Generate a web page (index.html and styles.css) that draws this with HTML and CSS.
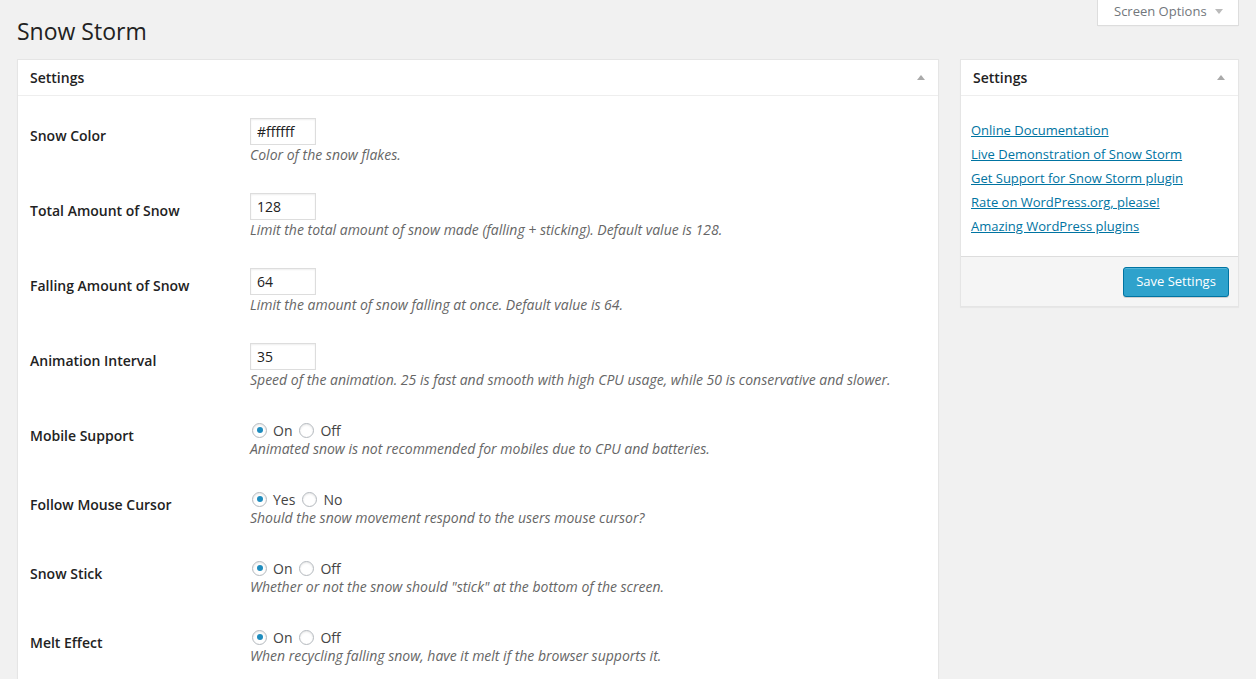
FILE: index.html
```html
<!DOCTYPE html>
<html lang="en">
<head>
<meta charset="utf-8">
<title>Snow Storm</title>
<link rel="stylesheet" href="styles.css">
</head>
<body>
<div class="wrap">
  <div class="topline">
    <h1 class="page-title">Snow Storm</h1>
    <button class="screen-options" type="button">Screen Options <span class="caret-down"></span></button>
  </div>
  <div class="columns">
    <div class="postbox main-box">
      <div class="box-head"><span>Settings</span><span class="caret-up"></span></div>
      <div class="form">
        <div class="row">
          <div class="label">Snow Color</div>
          <div class="field">
            <input class="text-input" type="text" value="#ffffff">
            <p class="description">Color of the snow flakes.</p>
          </div>
        </div>
        <div class="row">
          <div class="label">Total Amount of Snow</div>
          <div class="field">
            <input class="text-input" type="text" value="128">
            <p class="description">Limit the total amount of snow made (falling + sticking). Default value is 128.</p>
          </div>
        </div>
        <div class="row">
          <div class="label">Falling Amount of Snow</div>
          <div class="field">
            <input class="text-input" type="text" value="64">
            <p class="description">Limit the amount of snow falling at once. Default value is 64.</p>
          </div>
        </div>
        <div class="row">
          <div class="label">Animation Interval</div>
          <div class="field">
            <input class="text-input" type="text" value="35">
            <p class="description">Speed of the animation. 25 is fast and smooth with high CPU usage, while 50 is conservative and slower.</p>
          </div>
        </div>
        <div class="row">
          <div class="label">Mobile Support</div>
          <div class="field">
            <div class="radios">
              <label class="opt"><input type="radio" name="mobile" checked>On</label>
              <label class="opt"><input type="radio" name="mobile">Off</label>
            </div>
            <p class="description">Animated snow is not recommended for mobiles due to CPU and batteries.</p>
          </div>
        </div>
        <div class="row">
          <div class="label">Follow Mouse Cursor</div>
          <div class="field">
            <div class="radios">
              <label class="opt"><input type="radio" name="mouse" checked>Yes</label>
              <label class="opt"><input type="radio" name="mouse">No</label>
            </div>
            <p class="description">Should the snow movement respond to the users mouse cursor?</p>
          </div>
        </div>
        <div class="row">
          <div class="label">Snow Stick</div>
          <div class="field">
            <div class="radios">
              <label class="opt"><input type="radio" name="stick" checked>On</label>
              <label class="opt"><input type="radio" name="stick">Off</label>
            </div>
            <p class="description">Whether or not the snow should "stick" at the bottom of the screen.</p>
          </div>
        </div>
        <div class="row">
          <div class="label">Melt Effect</div>
          <div class="field">
            <div class="radios">
              <label class="opt"><input type="radio" name="melt" checked>On</label>
              <label class="opt"><input type="radio" name="melt">Off</label>
            </div>
            <p class="description">When recycling falling snow, have it melt if the browser supports it.</p>
          </div>
        </div>
      </div>
    </div>
    <div class="postbox side-box">
      <div class="box-head"><span>Settings</span><span class="caret-up"></span></div>
      <ul class="links">
        <li><a href="#">Online Documentation</a></li>
        <li><a href="#">Live Demonstration of Snow Storm</a></li>
        <li><a href="#">Get Support for Snow Storm plugin</a></li>
        <li><a href="#">Rate on WordPress.org, please!</a></li>
        <li><a href="#">Amazing WordPress plugins</a></li>
      </ul>
      <div class="actions">
        <button class="primary" type="button">Save Settings</button>
      </div>
    </div>
  </div>
</div>
</body>
</html>
```
FILE: styles.css
```css
* { box-sizing: border-box; }
html, body { margin: 0; padding: 0; }
body {
  background: #f1f1f1;
  color: #444;
  font-family: "Open Sans", "Noto Sans", sans-serif;
  font-size: 13px;
}
.wrap {
  padding: 0 17px 0 17px;
}
.topline {
  display: flex;
  justify-content: space-between;
  align-items: flex-start;
}
.page-title {
  margin: 17px 0 0 0;
  font-size: 23px;
  font-weight: 400;
  line-height: 29px;
  color: #222;
}
.screen-options {
  display: flex;
  align-items: center;
  height: 26px;
  width: 142px;
  margin: 0;
  padding: 0 0 3px 16px;
  background: #fff;
  border: 1px solid #ddd;
  border-top: none;
  font-family: inherit;
  font-size: 13px;
  color: #72777c;
  line-height: 22px;
  box-shadow: 0 1px 1px -1px rgba(0,0,0,.1);
}
.caret-down {
  display: inline-block;
  width: 0;
  height: 0;
  margin-left: 8px;
  border-left: 4px solid transparent;
  border-right: 4px solid transparent;
  border-top: 5px solid #bbb;
}
.columns {
  display: flex;
  align-items: flex-start;
  gap: 21px;
  margin-top: 13px;
}
.postbox {
  background: #fff;
  border: 1px solid #e5e5e5;
  box-shadow: 0 1px 1px rgba(0,0,0,.04);
}
.main-box {
  width: 922px;
  flex: none;
  padding-bottom: 40px;
}
.side-box {
  width: 279px;
  flex: none;
}
.box-head {
  display: flex;
  justify-content: space-between;
  align-items: center;
  height: 36px;
  padding: 0 13px 1px 12px;
  border-bottom: 1px solid #eee;
  font-size: 14px;
  font-weight: 600;
  color: #222;
}
.caret-up {
  display: inline-block;
  width: 0;
  height: 0;
  border-left: 4px solid transparent;
  border-right: 4px solid transparent;
  border-bottom: 5px solid #aaa;
}
.form {
  padding: 7px 12px 0 12px;
}
.row {
  display: grid;
  grid-template-columns: 220px 1fr;
  padding: 15px 0 14px 0;
}
.label {
  margin-top: 9px;
  font-size: 14px;
  line-height: 18px;
  font-weight: 600;
  color: #222;
}
.field {
  display: flex;
  flex-direction: column;
  align-items: flex-start;
}
.text-input {
  width: 66px;
  height: 27px;
  margin: 0;
  padding: 3px 6px;
  border: 1px solid #ddd;
  box-shadow: inset 0 1px 2px rgba(0,0,0,.07);
  background: #fff;
  font-family: inherit;
  font-size: 14px;
  color: #222;
  outline: none;
}
.description {
  margin: 0;
  font-size: 14px;
  line-height: 19px;
  font-style: italic;
  color: #666;
}
.radios {
  display: flex;
  align-items: center;
  height: 21px;
  font-size: 14px;
  color: #444;
}
.opt {
  display: flex;
  align-items: center;
  margin-right: 5px;
  padding-top: 3px;
}
.opt input {
  appearance: none;
  -webkit-appearance: none;
  position: relative;
  width: 15px;
  height: 15px;
  margin: 0 6px 0 2px;
  border: 1px solid #b4b9be;
  border-radius: 50%;
  background: #fff;
  box-shadow: inset 0 1px 2px rgba(0,0,0,.1);
}
.opt input:checked::before {
  content: "";
  position: absolute;
  left: 3.5px;
  top: 3.5px;
  width: 6px;
  height: 6px;
  border-radius: 50%;
  background: #1e8cbe;
}
.links {
  list-style: none;
  margin: 0;
  padding: 25px 10px 21px 10px;
}
.links li {
  margin: 0 0 6px 0;
  line-height: 18px;
}
.links li:last-child { margin-bottom: 0; }
.links a {
  font-size: 13px;
  color: #0074a2;
  text-decoration: underline;
}
.actions {
  display: flex;
  justify-content: flex-end;
  padding: 10px 9px 9px 10px;
  background: #f5f5f5;
  border-top: 1px solid #ddd;
}
.primary {
  height: 30px;
  width: 106px;
  margin: 0;
  padding: 0 0 2px;
  background: #2ea2cc;
  border: 1px solid #0074a2;
  border-radius: 3px;
  box-shadow: inset 0 1px 0 rgba(120,200,230,.5), 0 1px 0 rgba(0,0,0,.15);
  color: #fff;
  font-family: inherit;
  font-size: 13px;
  line-height: 26px;
}
```
